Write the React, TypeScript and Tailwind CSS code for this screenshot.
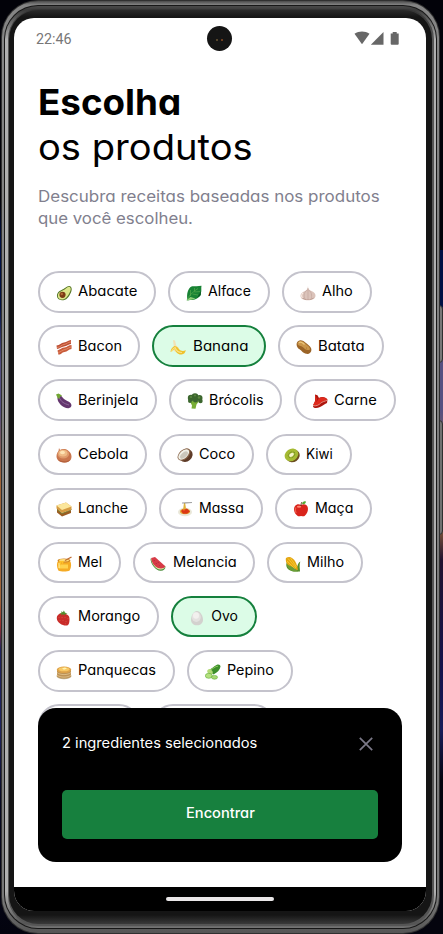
import { useLayoutEffect, useRef, useState, type ReactNode } from "react";

/* Extends its text horizontally to fill a given width. */
function Fit({ children, width, className = "" }: { children: string; width: number; className?: string }) {
  const ref = useRef<HTMLSpanElement>(null);
  const [scale, setScale] = useState(1);
  useLayoutEffect(() => {
    if (ref.current) setScale(width / ref.current.offsetWidth);
  }, [width, children]);
  return (
    <span className={`block shrink-0 self-start whitespace-nowrap ${className}`} style={{ width }}>
      <span ref={ref} className="inline-block origin-left" style={{ transform: `scaleX(${scale})` }}>
        {children}
      </span>
    </span>
  );
}

const art: Record<string, ReactNode> = {
  Abacate: (
    <>
      <path d="M14.500 1.500c2 1.600 1.200 4.500-.2 7.200C12.800 12 10.500 15.300 6 15.300c-3.500 0-5.400-2.200-5-5.200C1.500 6 6 5.200 8.500 3.300 10.800 1.600 12.800.2 14.500 1.500z" fill="#527325" />
      <path d="M13.900 2c1.600 1.300.8 3.900-.7 6.400-1.700 3.100-3.900 6.100-7.300 6.100-2.900 0-4.300-1.800-4-4.200C2.200 6.800 6.800 6.200 9.200 4.100c1.700-1.500 3.300-3.200 4.700-2.100z" fill="#dce68a" />
      <circle cx="6.500" cy="9.800" r="3.100" fill="#7b3b13" /><circle cx="5.800" cy="9" r="1.200" fill="#b26a35" />
    </>
  ),
  Alface: (
    <>
      <path d="M1.500 15.500C.3 9 2 3 5.500 1.500c2-.8 3.500.2 5-.3l5-.4c-.6 3 .4 5-.7 7.500.2 3-2 4-3.800 5.200C8 15.500 5 14.500 1.500 15.500z" fill="#188334" />
      <path d="M1 15.500c1-4 5-8 11-12M4.500 11V5M6.500 9l5.500 1M8.500 7l5.500-.5M8.500 6.500V3" stroke="#5fb050" strokeWidth=".6" fill="none" />
      <path d="M1 15.500c1-1.500 2-2.500 3.500-3.500l5 1.500c-3 1.500-5.500 1-8.500 2z" fill="#8fcf78" /><path d="M11 13l4-7-.3 4z" fill="#0b5724" />
    </>
  ),
  Alho: (
    <>
      <path d="M8 1c0 3 1 4 3.500 5 3 1.200 4.200 3 4 5-.4 3-3.500 4.200-7.500 4.200S.7 14 .5 11c-.1-2 1.500-4 4.500-5 2-.8 2.600-2 3-5z" fill="#dbc3ba" />
      <path d="M7.500 5C3 7 3.500 13 6 15M8.500 5c4 2 3.500 8 2 10M8 3v12" stroke="#b99a92" strokeWidth=".5" fill="none" />
      <path d="M2 12.500c3 2.500 9 2.500 12 0-1.500 3-10.500 3-12 0z" fill="#a47c70" /><path d="M3 8c-2 2-1.500 4-.5 5" stroke="#fff1e9" fill="none" />
    </>
  ),
  Bacon: (
    <>
      <path d="M.5 6.500C4 6 5 4 8 3.500c3-.5 4-2 7-2.500v4c-3 .2-4 2-7 2.500S4 9.500 1 10z" fill="#bd4f35" />
      <path d="M1.500 11.500c3-1 4-3 7-3 3-.5 4-2.500 7-2.500v4c-3 .5-4 2.500-7 3s-3 2.500-6 2.800z" fill="#c85b3b" />
      <path d="M1 8.500c4-.5 4-2.500 7-3 3-.5 4-2.500 7-2.500M2 13.500c3-.5 4-2.500 7-3s4-2.500 6.500-2.500" stroke="#e8936d" strokeWidth=".8" fill="none" />
    </>
  ),
  Banana: (
    <>
      <path d="M3 1l2 .4 1.200 5L9 9l-3.500 4C3.500 12 3 9 3.800 7z" fill="#f3e2b4" />
      <path d="M4.500 7c-2 1-3.800 3-4 6 2-.8 3.200-2.200 4.500-3 .2 3 3 5.700 6.500 5.500 2.500-.1 4-2 4.200-4.500-2 1.500-5 1.300-7-1.200C7.500 8 6 7 4.500 7z" fill="#efc22c" />
      <path d="M1.500 12.500c1-2 2-3.500 3.500-4 1.500 4 4 5.200 7 5" stroke="#f8e38a" strokeWidth="1.200" fill="none" />
    </>
  ),
  Batata: (
    <>
      <path d="M.8 4C2.500-.2 7 .8 10 4c1.500 1.500 4 2.500 5 5 1.500 4-1.500 6.600-5 5.800-3-.5-4-3-6.500-4.500C1.400 9 .1 6.500.8 4z" fill="#9b6427" />
      <path d="M1.500 4.500C3 .8 6.500 1.800 9 4.300c2 2.200 5 3.200 5 6.200-3 1.500-5-.2-7-2.200S2 7.500 1.500 4.500z" fill="#c9954a" />
      <path d="M3 4c1.500-2 4 0 5.500 1.500" stroke="#ecc77c" strokeWidth="1.200" fill="none" /><circle cx="10.500" cy="9" r=".4" fill="#815018" />
    </>
  ),
  Berinjela: (
    <>
      <path d="M2.500 2.500c2.500-.8 3.500 1.600 5.500 3.500 2 1.700 4.500 2 6.500 4 1.800 2 1 5-2 5.300C7 15.600.8 9 1.500 4.500z" fill="#64366e" />
      <path d="M3 4c2 5 5 6.500 10 8" stroke="#8e6a9b" strokeWidth="1" fill="none" />
      <path d="M0 1.500L2.500.5c1 .5 2.500 1 3.500 2.500L4 3.800 3.200 6 1.700 5z" fill="#71a633" />
    </>
  ),
  Brócolis: (
    <>
      <path d="M6 7l3 1 3.500-.5-3 4-1 4.300-4-.3.500-3-1.500-3z" fill="#78ae35" />
      <g fill="#3b662e"><circle cx="4" cy="5" r="3.200" /><circle cx="8" cy="3.500" r="3.300" /><circle cx="12.500" cy="5" r="3" /><circle cx="13.500" cy="8" r="2.200" /><circle cx="3" cy="8" r="2" /><circle cx="8.500" cy="7" r="2.500" /></g>
      <g fill="#5c873f"><circle cx="4" cy="4" r="1.100" /><circle cx="8" cy="2.500" r="1" /><circle cx="12" cy="4.500" r="1.200" /></g>
    </>
  ),
  Carne: (
    <>
      <path d="M3 1.500l2.500.7L7 5c3-2 7-1 8.500 1.500L15 10c-3 1-4 3-7 4-3 1.500-7 1.500-7-1L3 8z" fill="#ad160f" />
      <path d="M3 1.500L5 6l-.8 3.500L7 5c3-1.500 6.500-.6 8 1.500-3 2-5 1.600-7 4-2 2-5 2.500-7 1.500L3.300 8z" fill="#df2a1d" />
      <path d="M1 12.500c3 1 6-.5 7.500-2.200S13 8.500 15.300 7" stroke="#f4a99a" strokeWidth=".8" fill="none" />
    </>
  ),
  Cebola: (
    <>
      <path d="M3 1l1 2c2-1.300 5.500-1.500 8 .5 2 1.300 3.500 3.500 3.500 6 0 4-3 6-7.300 6C3.500 15.500.5 13 .5 9.300.5 6.800 1.700 5 2.500 4z" fill="#c9764d" />
      <path d="M1.500 11.500c2 3 9 4 13 1-1 2-3.500 3-6.300 3-3 0-5.500-1.300-6.700-4z" fill="#b4603c" />
      <ellipse cx="7.300" cy="7" rx="5.800" ry="4.500" fill="#de9a6b" /><ellipse cx="7" cy="6.200" rx="4.300" ry="3.200" fill="#efbb86" /><ellipse cx="6.500" cy="5.500" rx="2.500" ry="1.800" fill="#fde3b4" />
    </>
  ),
  Coco: (
    <>
      <ellipse cx="9" cy="8.500" rx="7" ry="6" fill="#5e3b28" transform="rotate(-40 9 8.500)" />
      <ellipse cx="7" cy="7.500" rx="7.500" ry="4.800" fill="#876348" transform="rotate(-43 7 7.500)" />
      <ellipse cx="6.700" cy="7.500" rx="6.500" ry="3.800" fill="#f1f1e8" transform="rotate(-43 6.700 7.500)" />
      <ellipse cx="7" cy="8" rx="4.700" ry="2.500" fill="#cbc7bb" transform="rotate(-43 7 8)" />
    </>
  ),
  Kiwi: (
    <>
      <ellipse cx="9" cy="9" rx="7" ry="6" fill="#6b4c1e" transform="rotate(-35 9 9)" />
      <ellipse cx="7.500" cy="7.800" rx="7.200" ry="6" fill="#a5ba33" transform="rotate(-35 7.500 7.800)" />
      <ellipse cx="7.500" cy="7.800" rx="3.500" ry="2.600" fill="none" stroke="#6b8420" strokeDasharray=".6 .7" transform="rotate(-35 7.500 7.800)" />
      <ellipse cx="7.500" cy="7.800" rx="2.600" ry="1.700" fill="#f3f3c9" transform="rotate(-35 7.500 7.800)" />
    </>
  ),
  Lanche: (
    <>
      <path d="M1 7l5 5 9-3v3l-9 3.500-5-4z" fill="#9b5c21" />
      <path d="M1 8.500l5 4 9.500-4" stroke="#75853a" strokeWidth="1" fill="none" />
      <path d="M.5 4.500L10 1.500l5.500 4v3L6 12 .5 7.500z" fill="#d69b42" />
      <path d="M.5 4.500L10 1.500l5.500 4L6 9z" fill="#fbe69b" />
    </>
  ),
  Massa: (
    <>
      <ellipse cx="8" cy="11" rx="7" ry="4.300" fill="#e9e7d8" /><ellipse cx="8" cy="10.500" rx="5" ry="2.800" fill="#e9aa31" />
      <path d="M4 10l2-2 4-.5 3 3-3 2.200H6z" fill="#db3815" /><path d="M6 9L7 2l1.200 0L9 8" fill="#deb33c" />
      <path d="M5 2h4l6-.5" stroke="#888" strokeWidth=".8" /><circle cx="7" cy="9" r=".8" fill="#fa6a28" />
    </>
  ),
  Maça: (
    <>
      <path d="M8 4c2-1 4-1 5.800.5C16 7 15 12.500 11.500 15c-1.200.8-2.500-.2-3.500-.1-1 0-2 .9-3.300.1C1 12.500 0 7.500 2 5c1.700-2 4-2 6-1z" fill="#d9241c" />
      <path d="M3 6.500c-1 2-.7 4 .2 5.500" stroke="#ee5a48" strokeWidth="1.300" fill="none" /><ellipse cx="6" cy="5.800" rx="2.200" ry="1" fill="#ff8671" />
      <path d="M8 5c0-2 .3-3 1-4" stroke="#603718" strokeWidth="1" fill="none" /><path d="M9 3c.5-2.500 2.500-3.200 4-2.300C12.500 2.500 11.500 3.600 9 3z" fill="#55a830" />
    </>
  ),
  Mel: (
    <>
      <path d="M2 5h12c1.500 2 1.600 6-.3 9.500C11 15.800 5 15.800 2.300 14.500.5 11 .6 7 2 5z" fill="#f5ab24" />
      <ellipse cx="8" cy="4.500" rx="6.500" ry="2" fill="#cd852a" /><ellipse cx="8" cy="4.200" rx="5" ry="1.200" fill="#ffdd77" />
      <path d="M9 4.500L15.500 1" stroke="#be6b30" strokeWidth="1.300" /><path d="M3 8.500h9v4H3z" fill="#ffd34e" /><path d="M3 5l1 5 1.500-4 1 2.500L8 5" fill="#ffc229" /><path d="M3 7v5" stroke="#fff0a0" />
    </>
  ),
  Melancia: (
    <>
      <path d="M.5 2.500c0 5.500 5 12 10 12.300 3 .2 5-1.800 5-4.300z" fill="#4a8c3a" /><path d="M1 2.300c.7 6 5 11 9 11.200 3 .3 5-1 5-3.200z" fill="#e4edac" />
      <path d="M1.200 2L5 1l10.300 9.300c-1 2.200-4.300 2.700-7.300 1.700C4.500 10.500 1.500 6.500 1.200 2z" fill="#d73b47" />
      <path d="M4 4l.4.7M6 7l.4.7M9 9l.4.4M8 6l.4.6" stroke="#7a262e" strokeWidth=".7" />
    </>
  ),
  Milho: (
    <>
      <path d="M2 6C0 10 2 14 8 15.500h7c0-3-1-6 .3-10-2 1-2.500 3-3 5L5 8z" fill="#548d29" />
      <path d="M1 2C4-.5 8 1.500 10 5c1.500 3 3 6 2.800 9C8 14 3 10.500 1.500 7 .9 5.500.5 3.500 1 2z" fill="#e3a513" />
      <path d="M3 2.500l8 9.500M5.500 2l6 9M2 5l8 8" stroke="#fbd035" strokeWidth=".8" /><path d="M2 8.500l5.500 2.500 6 4.500H9C5 14.500 2 12 2 8.500z" fill="#6b9d38" />
    </>
  ),
  Morango: (
    <>
      <path d="M2 5c2-2.500 5-2 7.500-1 2 .7 4 1.500 4 5 0 3-.3 6-2.500 6.500C7 16 1 13 .8 8.500.8 7 1 6 2 5z" fill="#c92c2a" />
      <path d="M3 7v.7M6 7l.1.7M9 7v.7M12 8v.7M4 10v.7M7 10v.7M10 11v.7M9.500 13.500v.7" stroke="#e67c5c" strokeWidth=".6" />
      <path d="M3 3.800l2.500-1-.3-1.500 1.700 1 1-1.800 1 2 2.600 1.200-2.600.3.600 1.500-2.500-1.200-1.700 1.200.2-1.700z" fill="#548b2c" />
    </>
  ),
  Ovo: (
    <>
      <path d="M8 1C11.200 1 14 6 14 9.800c0 3.500-2.500 5.500-6 5.500s-6-2-6-5.500C2 6 4.800 1 8 1z" fill="#d3d1ce" />
      <ellipse cx="7.300" cy="7" rx="4.500" ry="5" fill="#e3e1df" /><ellipse cx="7" cy="5.500" rx="3" ry="3.200" fill="#f2f0ee" />
    </>
  ),
  Panquecas: (
    <>
      <ellipse cx="8" cy="12" rx="7.500" ry="3.300" fill="#bfae8c" /><path d="M1 5.500h14v7c-2 2.500-12 2.500-14 0z" fill="#bd9255" />
      <path d="M1 8.500c3 2.800 11 2.800 14 0M1 11c3 2.800 11 2.800 14 0" stroke="#dfc08a" strokeWidth=".9" fill="none" />
      <ellipse cx="8" cy="5.800" rx="7.200" ry="3.300" fill="#dda249" /><ellipse cx="8" cy="5.300" rx="5.300" ry="2" fill="#f8c864" /><path d="M6 4.500l3-1 2 1L8 5.800z" fill="#fff3b0" />
    </>
  ),
  Pepino: (
    <>
      <path d="M3 6.500c3-1 6-4.800 9-5.800 2-.5 3.500.3 3.500 1.800-.4 3-3 6-7 8z" fill="#3d8f2c" /><path d="M5 6c3-1 5-3.800 8-3.800" stroke="#86c558" fill="none" />
      <ellipse cx="5" cy="7.800" rx="2.300" ry="3" fill="#b2da76" transform="rotate(-45 5 7.800)" />
      <ellipse cx="3.800" cy="11.800" rx="3.500" ry="2.500" fill="#b5e07f" stroke="#5dac34" strokeWidth=".6" /><ellipse cx="9.500" cy="13.300" rx="3" ry="1.900" fill="#a9d873" stroke="#5dac34" strokeWidth=".6" />
    </>
  ),
};

type Chip = [name: string, width: number, chosen?: boolean];
const rows: Chip[][] = [
  [["Abacate", 118], ["Alface", 102], ["Alho", 89.800]],
  [["Bacon", 102.300], ["Banana", 113.700, true], ["Batata", 105.500]],
  [["Berinjela", 119], ["Brócolis", 113], ["Carne", 101.800]],
  [["Cebola", 108.700], ["Coco", 94.900], ["Kiwi", 85.600]],
  [["Lanche", 108.700], ["Massa", 104], ["Maça", 97.300]],
  [["Mel", 82.500], ["Melancia", 122.500], ["Milho", 95.600]],
  [["Morango", 121], ["Ovo", 85.700, true]],
  [["Panquecas", 137], ["Pepino", 106]],
  [["", 102], ["", 123]],
];

function Product({ chip: [name, width, chosen] }: { chip: Chip }) {
  return (
    <div
      className={`flex h-[41.7px] shrink-0 items-center rounded-full border-2 pl-[15.800px] ${chosen ? "border-[#15803d] bg-[#dcfce7]" : "border-[#c4c3cc] bg-white"}`}
      style={{ width }}
    >
      {name && (
        <>
          <svg viewBox="0 0 16 16" className="mt-[2px] mr-[6.300px] size-4 shrink-0">{art[name]}</svg>
          <Fit width={width - 58.700} className="mt-[8.200px] text-[14px] leading-5 text-black">{name}</Fit>
        </>
      )}
    </div>
  );
}

function StatusBar() {
  return (
    <div className="flex h-[43px] items-start justify-between pt-[8px] pr-[27.500px] pl-[22px]">
      <span className="mt-[3px] w-[162px] font-['Roboto',sans-serif] text-[14.300px] leading-5 text-[#777]">22:46</span>
      <div className="flex size-[25px] items-center justify-center gap-[3px] rounded-full bg-[#151515]">
        <i className="mt-[2px] size-[2px] rounded-full bg-[#6b5634]" />
        <i className="mt-[2px] size-[2px] rounded-full bg-[#8a4a22]" />
      </div>
      <svg viewBox="0 0 157 24" className="h-6 w-[157px]" fill="#676767">
        <path d="M112.500 7.800c4.500-3.200 10.500-3.200 15 0L120 18.300z" />
        <path d="M141.500 6v12.700h-12.700z" />
        <path d="M148.700 7.500h2V6h4v1.500h2v10.300a1 1 0 0 1-1 1h-6a1 1 0 0 1-1-1z" />
      </svg>
    </div>
  );
}

function SelectionPanel() {
  return (
    <div className="absolute top-[690px] left-6 flex h-[154px] w-[363.500px] flex-col rounded-[18px] bg-black px-[23.700px] pt-[24px] text-[14px] text-white">
      <div className="flex h-[58.300px] items-start justify-between">
        <Fit width={195} className="leading-[22px]">2 ingredientes selecionados</Fit>
        <svg viewBox="0 0 14 14" className="mt-[5px] mr-[5px] size-[14px]" stroke="#7b7988" strokeWidth="1.700"><path d="M.8.8l12.400 12.400M13.200.8L.8 13.200" /></svg>
      </div>
      <button className="flex h-[48.400px] justify-center rounded-[5px] bg-[#17803e] pt-[12px] pr-[2px]">
        <Fit width={69} className="leading-[22px] font-medium">Encontrar</Fit>
      </button>
    </div>
  );
}

function Screen() {
  return (
    <div className="relative flex h-[893px] w-[412px] flex-col overflow-hidden rounded-[20px] bg-white">
      <StatusBar />
      <main className="flex grow flex-col overflow-hidden pl-6">
        <h1 className="flex flex-col pt-[19px] text-[36px] leading-[44.500px] text-black">
          <Fit width={143} className="font-bold">Escolha</Fit>
          <Fit width={215} className="font-normal">os produtos</Fit>
        </h1>
        <p className="flex flex-col pt-[16.500px] text-[15.500px] leading-[22.500px] text-[#817f8e]">
          <Fit width={341.500}>Descubra receitas baseadas nos produtos</Fit>
          <Fit width={155}>que você escolheu.</Fit>
        </p>
        <div className="mt-[40.800px] flex flex-col gap-[12.400px]">
          {rows.map((row, i) => (
            <div key={i} className="flex gap-[12.200px]">
              {row.map((chip, j) => <Product key={j} chip={chip} />)}
            </div>
          ))}
        </div>
      </main>
      <div className="flex h-6 shrink-0 items-center justify-center bg-black">
        <div className="h-1 w-[108px] rounded-full bg-[#e9e7e8]" />
      </div>
      <SelectionPanel />
    </div>
  );
}

export default function App() {
  return (
    <div className="relative h-[934px] w-[443px] overflow-hidden bg-[linear-gradient(#020209_0_200px,#001044_240px_305px,#555081_363px_410px,#a0653a_480px_600px,#9a3030_625px,#1f235e_650px_730px,#070922_800px,#03030e)] font-['Inter','Liberation_Sans',sans-serif] [font-feature-settings:'cv11'] antialiased">
      <div className="absolute top-0 right-0 h-[250px] w-5 bg-[#020209]" />
      <div className="absolute top-[520px] right-0 h-[414px] w-5 bg-[linear-gradient(#9a693c,#21112f_40px,#14124b_150px,#171b58_210px,#04040e_260px)]" />
      <div className="absolute top-[305px] right-0 h-[58px] w-[6px] rounded-r-sm border border-[#303030] bg-[#777]" />
      <div className="absolute top-[420px] right-0 h-[115px] w-[6px] rounded-r-sm border border-[#303030] bg-[#707070]" />
      <div className="absolute top-0 left-[1px] flex h-[934px] w-[439px] rounded-[37px] bg-[#303030] p-px">
        <div className="flex grow rounded-[36px] bg-[linear-gradient(#4a4a4a,#858585_4px,#777_900px,#555)] p-[2px] pt-[4px] pb-[4px]">
          <div className="flex grow rounded-[34px] bg-[#171717] p-px">
            <div className="flex grow rounded-[33px] bg-[linear-gradient(#4a4a4a,#3a3a3a_4px,#b0b0b0_34px,#b0b0b0_885px,#555_918px,#777)] p-[2.500px]">
              <div className="flex grow rounded-[30px] bg-[linear-gradient(#333,#555_30px,#555_880px,#555)] p-[1.500px]">
                <div className="grow rounded-[29px] bg-[linear-gradient(#2a2a2a,#151515_7px,#151515_905px,#3a3a3a)]" />
              </div>
            </div>
          </div>
        </div>
      </div>
      <div className="relative flex pt-[18px] pl-[14px]">
        <Screen />
      </div>
    </div>
  );
}
